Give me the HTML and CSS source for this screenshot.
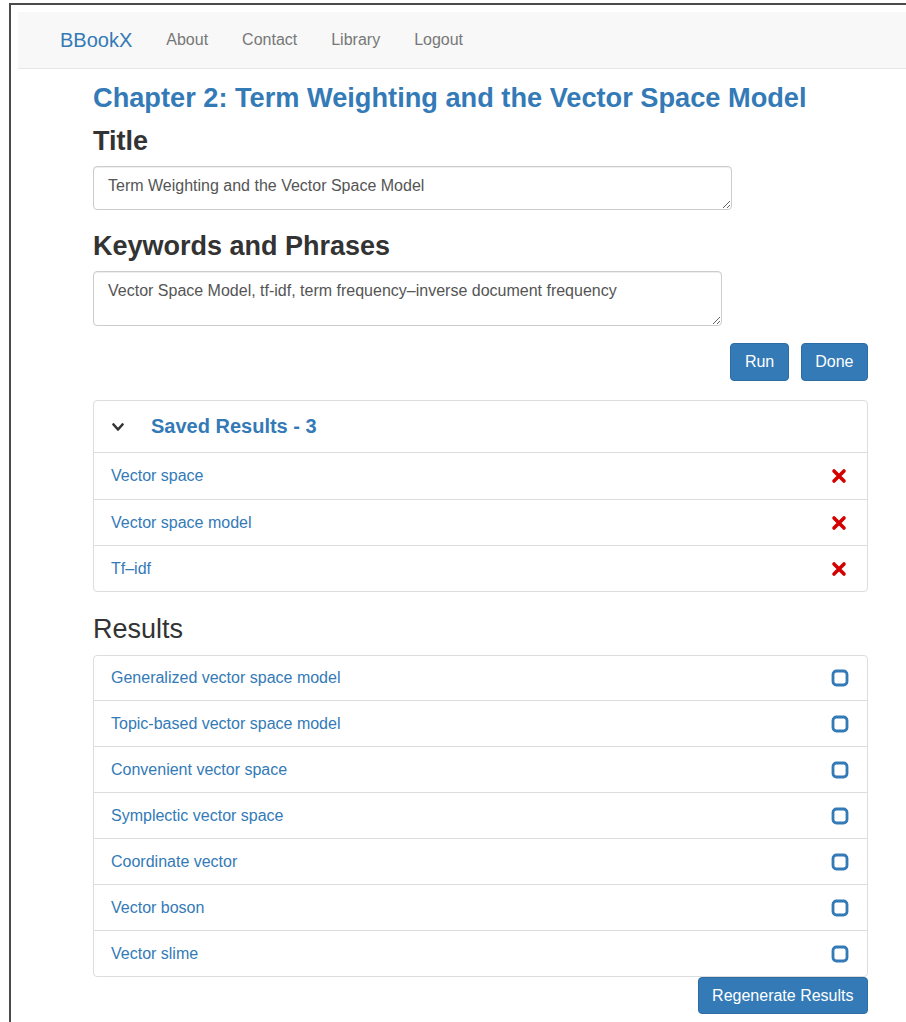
FILE: index.html
```html
<!DOCTYPE html>
<html lang="en">
<head>
<meta charset="utf-8">
<title>BBookX - Chapter 2</title>
<link rel="stylesheet" href="styles.css">
</head>
<body>
<div class="frame">
  <nav class="navbar">
    <a class="brand" href="#">BBookX</a>
    <ul class="nav-links">
      <li><a href="#">About</a></li>
      <li><a href="#">Contact</a></li>
      <li><a href="#">Library</a></li>
      <li><a href="#">Logout</a></li>
    </ul>
  </nav>

  <main class="container">
    <h1 class="chapter-title">Chapter 2: Term Weighting and the Vector Space Model</h1>

    <h2 class="field-label">Title</h2>
    <textarea class="field field-title" rows="1">Term Weighting and the Vector Space Model</textarea>

    <h2 class="field-label">Keywords and Phrases</h2>
    <textarea class="field field-keywords" rows="2">Vector Space Model, tf-idf, term frequency–inverse document frequency</textarea>

    <div class="actions">
      <button class="btn btn-run">Run</button>
      <button class="btn btn-done">Done</button>
    </div>

    <section class="panel">
      <div class="panel-heading">
        <svg class="chevron" width="12" height="9" viewBox="0 0 12 9"><polyline points="1.5,1.5 6,6.5 10.5,1.5" fill="none" stroke="#333" stroke-width="2.6" stroke-linecap="round" stroke-linejoin="round"/></svg>
        <span class="panel-title">Saved Results - 3</span>
      </div>
      <ul class="list">
        <li class="list-item"><a href="#">Vector space</a><svg class="remove" width="16" height="16" viewBox="0 0 16 16"><path d="M3 3 L13 13 M13 3 L3 13" stroke="#d40000" stroke-width="3.6" stroke-linecap="round"/></svg></li>
        <li class="list-item"><a href="#">Vector space model</a><svg class="remove" width="16" height="16" viewBox="0 0 16 16"><path d="M3 3 L13 13 M13 3 L3 13" stroke="#d40000" stroke-width="3.6" stroke-linecap="round"/></svg></li>
        <li class="list-item"><a href="#">Tf–idf</a><svg class="remove" width="16" height="16" viewBox="0 0 16 16"><path d="M3 3 L13 13 M13 3 L3 13" stroke="#d40000" stroke-width="3.6" stroke-linecap="round"/></svg></li>
      </ul>
    </section>

    <h2 class="results-title">Results</h2>
    <ul class="list results-list">
      <li class="list-item"><a href="#">Generalized vector space model</a><svg class="check" width="18" height="18" viewBox="0 0 18 18"><rect x="2" y="2" width="14" height="14" rx="3.5" fill="none" stroke="#337ab7" stroke-width="2.8"/></svg></li>
      <li class="list-item"><a href="#">Topic-based vector space model</a><svg class="check" width="18" height="18" viewBox="0 0 18 18"><rect x="2" y="2" width="14" height="14" rx="3.5" fill="none" stroke="#337ab7" stroke-width="2.8"/></svg></li>
      <li class="list-item"><a href="#">Convenient vector space</a><svg class="check" width="18" height="18" viewBox="0 0 18 18"><rect x="2" y="2" width="14" height="14" rx="3.5" fill="none" stroke="#337ab7" stroke-width="2.8"/></svg></li>
      <li class="list-item"><a href="#">Symplectic vector space</a><svg class="check" width="18" height="18" viewBox="0 0 18 18"><rect x="2" y="2" width="14" height="14" rx="3.5" fill="none" stroke="#337ab7" stroke-width="2.8"/></svg></li>
      <li class="list-item"><a href="#">Coordinate vector</a><svg class="check" width="18" height="18" viewBox="0 0 18 18"><rect x="2" y="2" width="14" height="14" rx="3.5" fill="none" stroke="#337ab7" stroke-width="2.8"/></svg></li>
      <li class="list-item"><a href="#">Vector boson</a><svg class="check" width="18" height="18" viewBox="0 0 18 18"><rect x="2" y="2" width="14" height="14" rx="3.5" fill="none" stroke="#337ab7" stroke-width="2.8"/></svg></li>
      <li class="list-item"><a href="#">Vector slime</a><svg class="check" width="18" height="18" viewBox="0 0 18 18"><rect x="2" y="2" width="14" height="14" rx="3.5" fill="none" stroke="#337ab7" stroke-width="2.8"/></svg></li>
    </ul>
    <div class="actions actions-tight">
      <button class="btn btn-regen">Regenerate Results</button>
    </div>
  </main>
</div>
</body>
</html>
```

FILE: styles.css
```css
* { box-sizing: border-box; }

html, body {
  margin: 0;
  padding: 0;
  background: #fff;
  font-family: "Liberation Sans", Arial, sans-serif;
  color: #333;
  overflow: hidden;
}

/* outer window edge */
.frame {
  margin: 3px 0 0 9px;
  border-top: 2px solid #4a4a4a;
  border-left: 2px solid #4a4a4a;
  padding: 7px 0 0 7px;
  min-height: 1019px;
}

/* top navigation */
.navbar {
  display: flex;
  align-items: center;
  height: 57px;
  background: #f8f8f8;
  border-bottom: 1px solid #e7e7e7;
  padding-left: 42px;
}

.brand {
  font-size: 20px;
  color: #337ab7;
  text-decoration: none;
  margin-right: 17px;
}

.nav-links {
  display: flex;
  list-style: none;
  margin: 0;
  padding: 0;
}

.nav-links a {
  display: block;
  padding: 0 17px;
  font-size: 16px;
  color: #777;
  text-decoration: none;
}

/* page body */
.container {
  margin-left: 75px;
  width: 775px;
}

.chapter-title {
  margin: 13px 0 0;
  font-size: 27.2px;
  line-height: 32px;
  font-weight: 700;
  color: #337ab7;
}

.field-label {
  margin: 12px 0 9px;
  font-size: 27px;
  line-height: 31px;
  font-weight: 700;
  color: #333;
}

.field {
  display: block;
  font-family: "Liberation Sans", Arial, sans-serif;
  font-size: 16px;
  line-height: 22px;
  color: #555;
  border: 1px solid #ccc;
  border-radius: 4px;
  padding: 8px 14px;
  margin: 0;
  box-shadow: inset 0 1px 1px rgba(0,0,0,.075);
  background: #fff;
}

.field-title {
  width: 639px;
  height: 44px;
  margin-bottom: 21px;
}

.field-keywords {
  width: 629px;
  height: 55px;
}

.actions {
  display: flex;
  justify-content: flex-end;
  gap: 12px;
  margin: 17px 0 19px;
}

.actions-tight {
  margin: 0;
}

.btn {
  font-family: "Liberation Sans", Arial, sans-serif;
  font-size: 16px;
  color: #fff;
  background: #337ab7;
  border: 1px solid #2e6da4;
  border-radius: 4px;
  height: 38px;
  padding: 0 13.5px;
}

.btn-regen {
  height: 37px;
  padding: 0 13.5px;
}

/* saved results panel */
.panel {
  border: 1px solid #ddd;
  border-radius: 4px;
  background: #fff;
}

.panel-heading {
  display: flex;
  align-items: center;
  height: 52px;
  padding-left: 18px;
  border-bottom: 1px solid #ddd;
}

.chevron {
  margin-right: 27px;
  margin-top: 2px;
}

.panel-title {
  font-size: 20px;
  font-weight: 700;
  color: #337ab7;
}

.list {
  list-style: none;
  margin: 0;
  padding: 0;
}

.list-item {
  display: flex;
  align-items: center;
  justify-content: space-between;
  height: 46px;
  padding: 0 18px 0 17px;
  border-top: 1px solid #ddd;
  font-size: 16px;
}

.list-item:first-child { border-top: 0; }

.list-item a {
  color: #337ab7;
  text-decoration: none;
}

.remove { margin-right: 2px; }

.results-title {
  margin: 21px 0 10px;
  font-size: 27px;
  line-height: 32px;
  font-weight: 400;
  color: #333;
}

.results-list {
  border: 1px solid #ddd;
  border-radius: 4px;
}

.results-list .list-item:first-child { height: 44px; }

.check { margin-right: 0; }
```
